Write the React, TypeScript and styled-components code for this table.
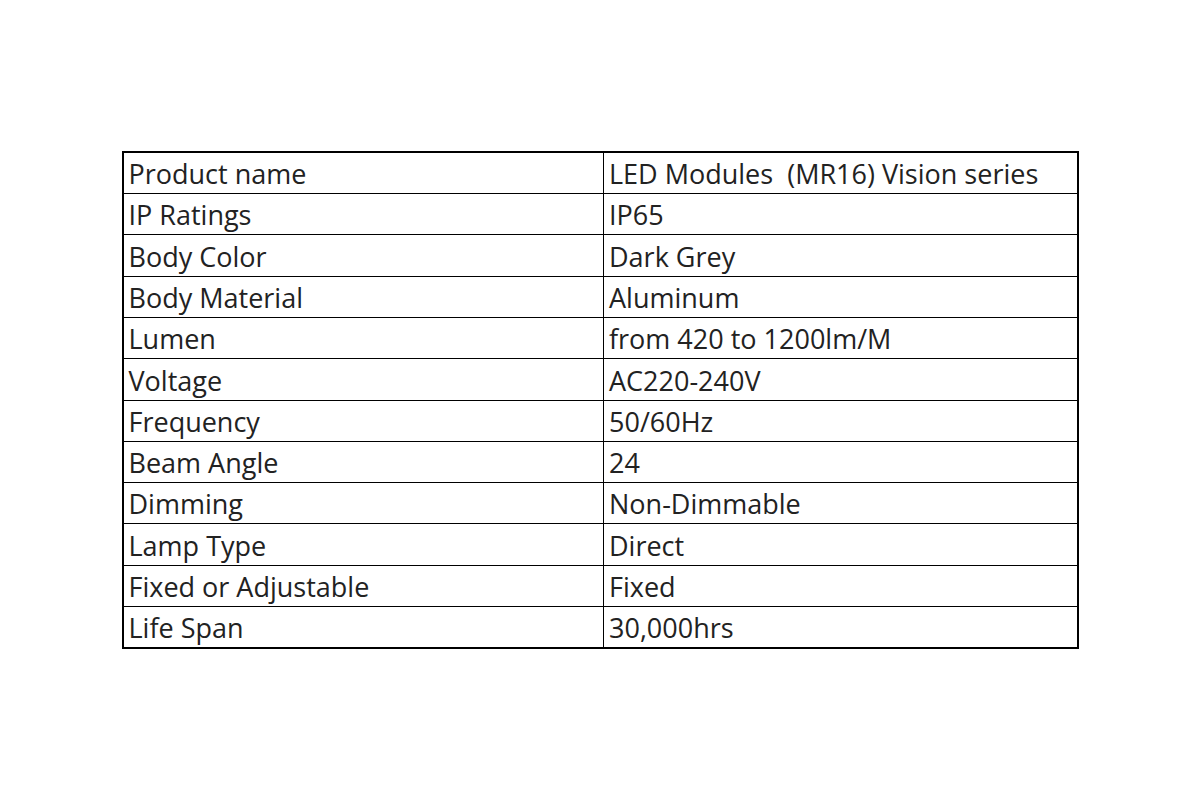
import * as React from 'react'
import styled, { createGlobalStyle } from 'styled-components'

const specs: [string, string][] = [
  ['Product name', 'LED Modules  (MR16) Vision series'],
  ['IP Ratings', 'IP65'],
  ['Body Color', 'Dark Grey'],
  ['Body Material', 'Aluminum'],
  ['Lumen', 'from 420 to 1200lm/M'],
  ['Voltage', 'AC220-240V'],
  ['Frequency', '50/60Hz'],
  ['Beam Angle', '24'],
  ['Dimming', 'Non-Dimmable'],
  ['Lamp Type', 'Direct'],
  ['Fixed or Adjustable', 'Fixed'],
  ['Life Span', '30,000hrs'],
]

export default function App() {
  return (
    <>
      <GlobalStyle />
      <Page>
        <SpecTable>
          <colgroup>
            <LabelCol />
            <col />
          </colgroup>
          <tbody>
            {specs.map(([label, value]) => (
              <Row key={label}>
                <Cell>{label}</Cell>
                <Cell>{value}</Cell>
              </Row>
            ))}
          </tbody>
        </SpecTable>
      </Page>
    </>
  )
}

const GlobalStyle = createGlobalStyle`
  html, body {
    margin: 0;
    padding: 0;
    background: #ffffff;
  }
`

const Page = styled.div`
  width: 1200px;
  height: 800px;
  display: flex;
  align-items: center;
  justify-content: center;
  font-family: 'Open Sans', 'Noto Sans', sans-serif;
`

const SpecTable = styled.table`
  width: 957px;
  border-collapse: collapse;
  border: 2px solid #000;
  table-layout: fixed;
`

const LabelCol = styled.col`
  width: 481px;
`

const Row = styled.tr`
  height: 41.3px;
`

const Cell = styled.td`
  border: 1px solid #000;
  padding: 0 0 6px 5px;
  font-size: 27px;
  color: #222222;
  white-space: pre;
  vertical-align: bottom;
  line-height: 1;
  overflow: hidden;
`
